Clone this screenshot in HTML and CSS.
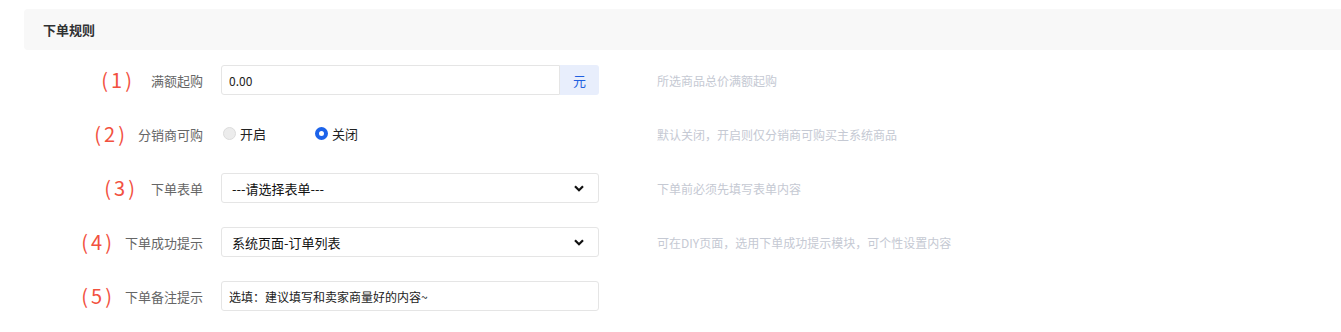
FILE: index.html
```html
<!DOCTYPE html>
<html lang="zh-CN">
<head>
<meta charset="utf-8">
<title>下单规则</title>
<link rel="stylesheet" href="styles.css">
</head>
<body>
<section class="panel">
  <div class="panel-head">下单规则</div>
  <div class="form">
    <div class="row">
      <div class="label"><span class="mark m1">(1)</span><span>满额起购</span></div>
      <div class="control">
        <div class="input-group">
          <input class="input" type="text" value="0.00">
          <span class="addon">元</span>
        </div>
      </div>
      <div class="help">所选商品总价满额起购</div>
    </div>
    <div class="row">
      <div class="label"><span class="mark m2">(2)</span><span>分销商可购</span></div>
      <div class="control radios">
        <label class="radio"><span class="dot"></span>开启</label>
        <label class="radio"><span class="dot on"></span>关闭</label>
      </div>
      <div class="help">默认关闭，开启则仅分销商可购买主系统商品</div>
    </div>
    <div class="row">
      <div class="label"><span class="mark m3">(3)</span><span>下单表单</span></div>
      <div class="control">
        <div class="select">---请选择表单---<svg class="chev" width="10" height="7" viewBox="0 0 10 7"><path d="M1 1.2 L5 5.2 L9 1.2" fill="none" stroke="#111" stroke-width="2.2"/></svg></div>
      </div>
      <div class="help">下单前必须先填写表单内容</div>
    </div>
    <div class="row">
      <div class="label"><span class="mark m4">(4)</span><span>下单成功提示</span></div>
      <div class="control">
        <div class="select">系统页面-订单列表<svg class="chev" width="10" height="7" viewBox="0 0 10 7"><path d="M1 1.2 L5 5.2 L9 1.2" fill="none" stroke="#111" stroke-width="2.2"/></svg></div>
      </div>
      <div class="help">可在DIY页面，选用下单成功提示模块，可个性设置内容</div>
    </div>
    <div class="row">
      <div class="label"><span class="mark m5">(5)</span><span>下单备注提示</span></div>
      <div class="control">
        <input class="input full" type="text" value="选填：建议填写和卖家商量好的内容~">
      </div>
      <div class="help"></div>
    </div>
  </div>
</section>
</body>
</html>
```

FILE: styles.css
```css
* { box-sizing: border-box; }
html, body { margin: 0; padding: 0; background: #fff; }
body {
  font-family: "Noto Sans CJK SC", "Liberation Sans", sans-serif;
  color: #333;
}
.panel { padding: 9px 0 0 24px; }
.panel-head {
  height: 41px;
  background: #f8f8f8;
  border-radius: 4px 0 0 4px;
  padding-left: 19px;
  display: flex;
  align-items: center;
  font-size: 13px;
  font-weight: bold;
  color: #303133;
}
.form {
  display: flex;
  flex-direction: column;
  gap: 24px;
  padding-top: 15px;
}
.row {
  display: grid;
  grid-template-columns: 179px 378px 1fr;
  column-gap: 18px;
  align-items: center;
  height: 30px;
}
.row .help { margin-left: 40px; }
.label {
  display: flex;
  justify-content: flex-end;
  align-items: center;
  font-size: 13px;
  color: #666;
  white-space: nowrap;
}
.mark {
  font-size: 20px;
  color: #f2513f;
  letter-spacing: 3px;
  line-height: 1;
}
.mark.m1 { margin-right: 16px; }
.mark.m2 { margin-right: 10px; }
.mark.m3 { margin-right: 13px; }
.mark.m4, .mark.m5 { margin-right: 10px; }
.help {
  font-size: 12px;
  color: #c5c9d3;
  white-space: nowrap;
}
.input-group { display: flex; height: 30px; }
.input {
  height: 30px;
  border: 1px solid #e5e5e5;
  border-radius: 3px 0 0 3px;
  padding: 0 7px;
  font-family: inherit;
  font-size: 12px;
  color: #222;
  outline: none;
  flex: 1;
  min-width: 0;
}
.input.full { width: 100%; border-radius: 3px; }
.addon {
  width: 39px;
  background: #e8eefc;
  color: #1f5fe0;
  font-size: 13px;
  display: flex;
  align-items: center;
  justify-content: center;
  border-radius: 0 3px 3px 0;
}
.select {
  height: 30px;
  border: 1px solid #e5e5e5;
  border-radius: 3px;
  padding: 0 14px 0 10px;
  display: flex;
  align-items: center;
  justify-content: space-between;
  font-size: 13px;
  color: #111;
}
.radios { display: flex; align-items: center; padding-left: 2px; padding-bottom: 2px; }
.radio {
  display: flex;
  align-items: center;
  gap: 4px;
  min-width: 92px;
  font-size: 13px;
  color: #222;
}
.dot {
  width: 13px;
  height: 13px;
  border-radius: 50%;
  background: #ececec;
  border: 1px solid #dcdcdc;
}
.dot.on {
  background: #fff;
  border: 4px solid #1c63ea;
}
```
